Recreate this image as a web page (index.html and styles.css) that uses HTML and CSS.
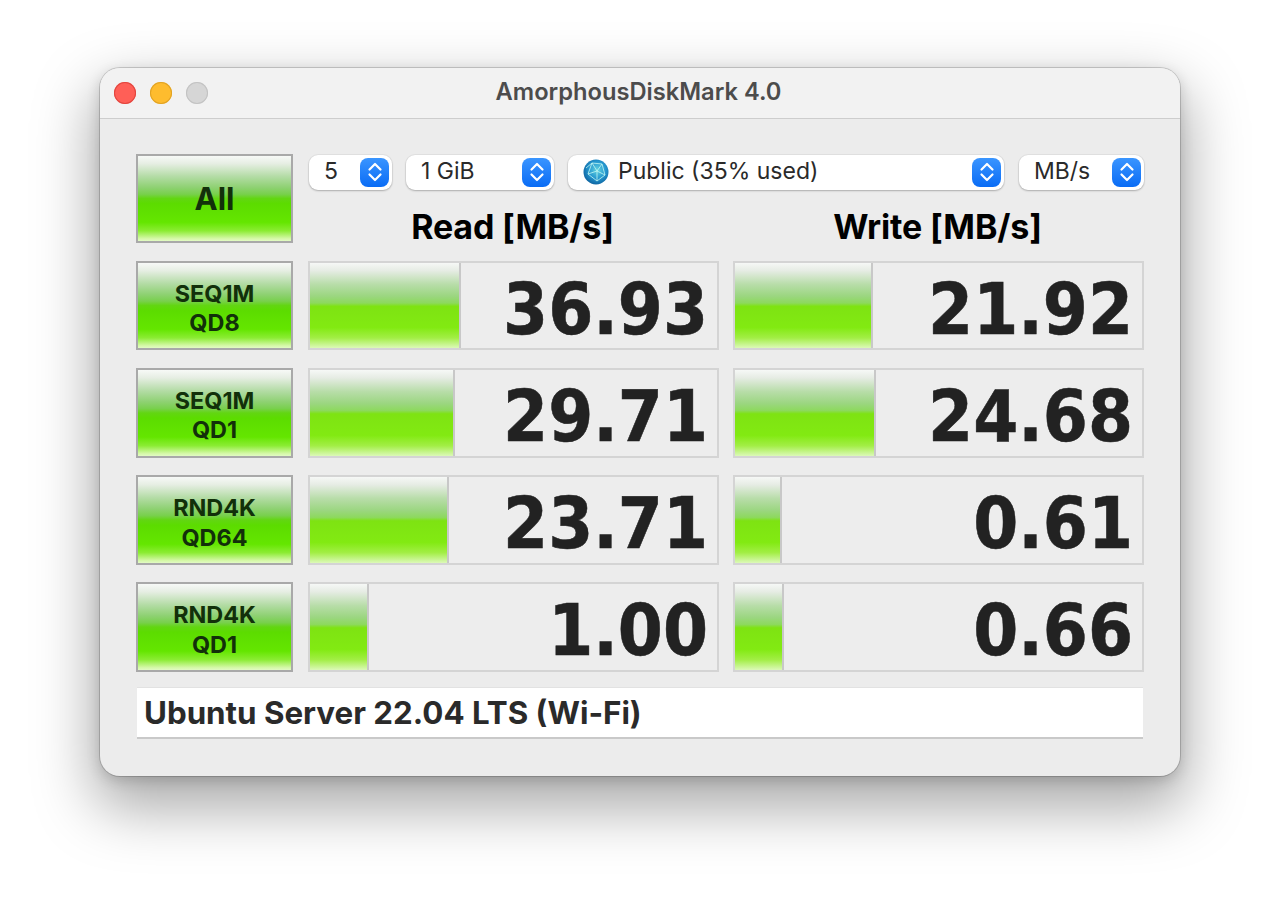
FILE: index.html
```html
<!DOCTYPE html>
<html lang="en">
<head>
<meta charset="utf-8">
<title>AmorphousDiskMark 4.0</title>
<link rel="stylesheet" href="styles.css">
</head>
<body>
<main class="window">
  <header class="titlebar">
    <div class="lights"><span class="light red"></span><span class="light yellow"></span><span class="light grey"></span></div>
    <h1 class="title">AmorphousDiskMark 4.0</h1>
  </header>
  <section class="content">
    <div class="grid">
      <button class="run run-all">All</button>
      <div class="top">
        <div class="controls">
          <div class="select s-count"><span class="sel-text">5</span><span class="stepper"><svg viewBox="0 0 16 22" width="16" height="22"><path d="M2.500 8.500L8 3l5.500 5.500M2.500 13.500L8 19l5.500-5.500"/></svg></span></div>
          <div class="select s-size"><span class="sel-text">1 GiB</span><span class="stepper"><svg viewBox="0 0 16 22" width="16" height="22"><path d="M2.500 8.500L8 3l5.500 5.500M2.500 13.500L8 19l5.500-5.500"/></svg></span></div>
          <div class="select s-drive">
            <svg class="globe" viewBox="0 0 26 26" width="26" height="26">
              <defs><radialGradient id="g" cx="0.55" cy="0.42" r="0.62"><stop offset="0" stop-color="#63d3e0"/><stop offset="0.55" stop-color="#2597cf"/><stop offset="1" stop-color="#0c5f9c"/></radialGradient></defs>
              <circle cx="13" cy="13" r="12.500" fill="url(#g)"/>
              <path d="M9 4L5 15l9 7 8-6-3-11zM9 4l5 8 5-7M5 15l9-3 8 4M14 12v10M3 9l6-5" fill="none" stroke="#c2f8f2" stroke-width=".8"/>
            </svg>
            <span class="sel-text">Public (35% used)</span><span class="stepper"><svg viewBox="0 0 16 22" width="16" height="22"><path d="M2.500 8.500L8 3l5.500 5.500M2.500 13.500L8 19l5.500-5.500"/></svg></span></div>
          <div class="select s-unit"><span class="sel-text">MB/s</span><span class="stepper"><svg viewBox="0 0 16 22" width="16" height="22"><path d="M2.500 8.500L8 3l5.500 5.500M2.500 13.500L8 19l5.500-5.500"/></svg></span></div>
        </div>
        <div class="headers"><div class="head">Read [MB/s]</div><div class="head">Write [MB/s]</div></div>
      </div>

      <button class="run">SEQ1M<br>QD8</button>
      <div class="meter"><div class="bar" style="width:151px"></div><span class="val">36.93</span></div>
      <div class="meter"><div class="bar" style="width:138px"></div><span class="val">21.92</span></div>

      <button class="run">SEQ1M<br>QD1</button>
      <div class="meter"><div class="bar" style="width:145px"></div><span class="val">29.71</span></div>
      <div class="meter"><div class="bar" style="width:141px"></div><span class="val">24.68</span></div>

      <button class="run">RND4K<br>QD64</button>
      <div class="meter"><div class="bar" style="width:139px"></div><span class="val">23.71</span></div>
      <div class="meter"><div class="bar" style="width:47px"></div><span class="val">0.61</span></div>

      <button class="run">RND4K<br>QD1</button>
      <div class="meter"><div class="bar" style="width:59px"></div><span class="val">1.00</span></div>
      <div class="meter"><div class="bar" style="width:49px"></div><span class="val">0.66</span></div>
    </div>
    <div class="comment">Ubuntu Server 22.04 LTS (Wi-Fi)</div>
  </section>
</main>
</body>
</html>
```
FILE: styles.css
```css
* { box-sizing: border-box; }
html, body { margin: 0; height: 908px; background: #fff; overflow: hidden; }
body { padding: 68px 100px 0; font-family: Inter, "Liberation Sans", sans-serif; }

.window {
  width: 1080px; height: 708px;
  background: #ececec;
  border-radius: 20px;
  box-shadow: 0 0 0 1px rgba(0,0,0,.16), 0 26px 60px 6px rgba(0,0,0,.34), 0 4px 14px rgba(0,0,0,.16);
  overflow: hidden;
}
.titlebar {
  height: 51px;
  display: flex; align-items: center;
  position: relative;
  background: #f2f2f2;
  border-bottom: 1px solid #cdcdcd;
  padding-left: 14px;
}
.lights { display: flex; gap: 14px; margin-top: -1px; }
.light { width: 22px; height: 22px; border-radius: 50%; }
.red { background: #ff5f57; box-shadow: inset 0 0 0 1px #e2463f; }
.yellow { background: #febc2e; box-shadow: inset 0 0 0 1px #e1a325; }
.grey { background: #d6d6d6; box-shadow: inset 0 0 0 1px #c3c3c3; }
.title {
  position: absolute; left: 0; right: 3px; top: -3px; bottom: 0; margin: 0;
  display: flex; align-items: center; justify-content: center;
  font-size: 23.7px; font-weight: 600; color: #4c4c4c;
}

.content { padding: 34.7px 36px 0; }
.grid {
  display: grid;
  grid-template-columns: 158px 411px 411px;
  grid-auto-rows: 89.5px;
  column-gap: 14px;
  row-gap: 17.7px;
}
.run {
  padding: 5px 0 0; margin: 0;
  width: 157px;
  border: 2px solid #a9a9a9;
  font: 700 23.4px/29.500px Inter, "Liberation Sans", sans-serif;
  color: #12300a;
  background: linear-gradient(#f7f9f7 0, #e6eee3 9%, #b4dca6 24%, #8ed172 37%, #78d04c 45%, #62d612 50%, #5cdc00 56%, #64e600 78%, #8bec33 88%, #d4f8a6 97%, #e2fbc4 100%);
}
.run-all { font-size: 31px; line-height: 1; padding: 1px 0 0; }

.top { grid-column: 2 / span 2; display: flex; flex-direction: column; }
.controls {
  display: flex; gap: 14px;
  height: 35px; margin: 1px 0 0 1px;
}
.select {
  flex: none;
  height: 35px;
  background: #fff;
  border-radius: 9px;
  box-shadow: 0 0 0 1px rgba(0,0,0,.04), 0 1px 2px rgba(0,0,0,.24);
  display: flex; align-items: center;
  font-size: 23px; color: #2a2a2a;
  padding: 0 3px 0 15px;
}
.s-count { width: 83px; }
.s-size { width: 148px; }
.s-drive { width: 436px; }
.s-unit { width: 125px; margin-left: 1px; }
.globe { margin-right: 9px; flex: none; }
.sel-text { flex: 1; white-space: nowrap; padding-bottom: 2px; }
.stepper {
  width: 29px; height: 29px; border-radius: 8px; flex: none;
  background: linear-gradient(#3a95ff, #0a6cf5);
  display: flex; align-items: center; justify-content: center;
}
.stepper svg path { fill: none; stroke: #fff; stroke-width: 2.200; stroke-linecap: round; stroke-linejoin: round; }

.headers {
  display: grid; grid-template-columns: 411px 411px; column-gap: 14px;
  text-align: center;
  margin: 14px 0 0 -1px;
}
.head { font-size: 34px; font-weight: 700; color: #000; line-height: 46px; letter-spacing: -.15px; }

.meter {
  position: relative;
  border: 2px solid #d4d4d4;
  background: #ededed;
  display: flex; align-items: center; justify-content: flex-end;
  padding-right: 9px;
}
.bar {
  position: absolute; left: 0; top: 0; bottom: 0;
  border-right: 2px solid #c8c8c8;
  background: linear-gradient(#f6f8f6 0, #e6ece4 9%, #b8dda9 25%, #9bd680 39%, #8dd95e 47%, #7ee312 51%, #82ea12 76%, #a2ee45 88%, #dcf9b8 100%);
}
.val {
  position: relative; top: 3px;
  font-family: "DejaVu Sans Condensed", "DejaVu Sans", sans-serif;
  font-stretch: condensed;
  font-size: 72px; font-weight: 700; color: #222;
  line-height: 1;
  -webkit-text-stroke: .5px #222;
}
.comment {
  width: 1006px; height: 52px; margin: 15px 0 0 1px;
  background: #fff;
  border-top: 1px solid #e2e2e2;
  border-bottom: 2px solid #c9c9c9;
  font-size: 31.300px; font-weight: 700; color: #2a2a2a;
  line-height: 50px; padding-left: 7px;
  white-space: nowrap;
}
```
